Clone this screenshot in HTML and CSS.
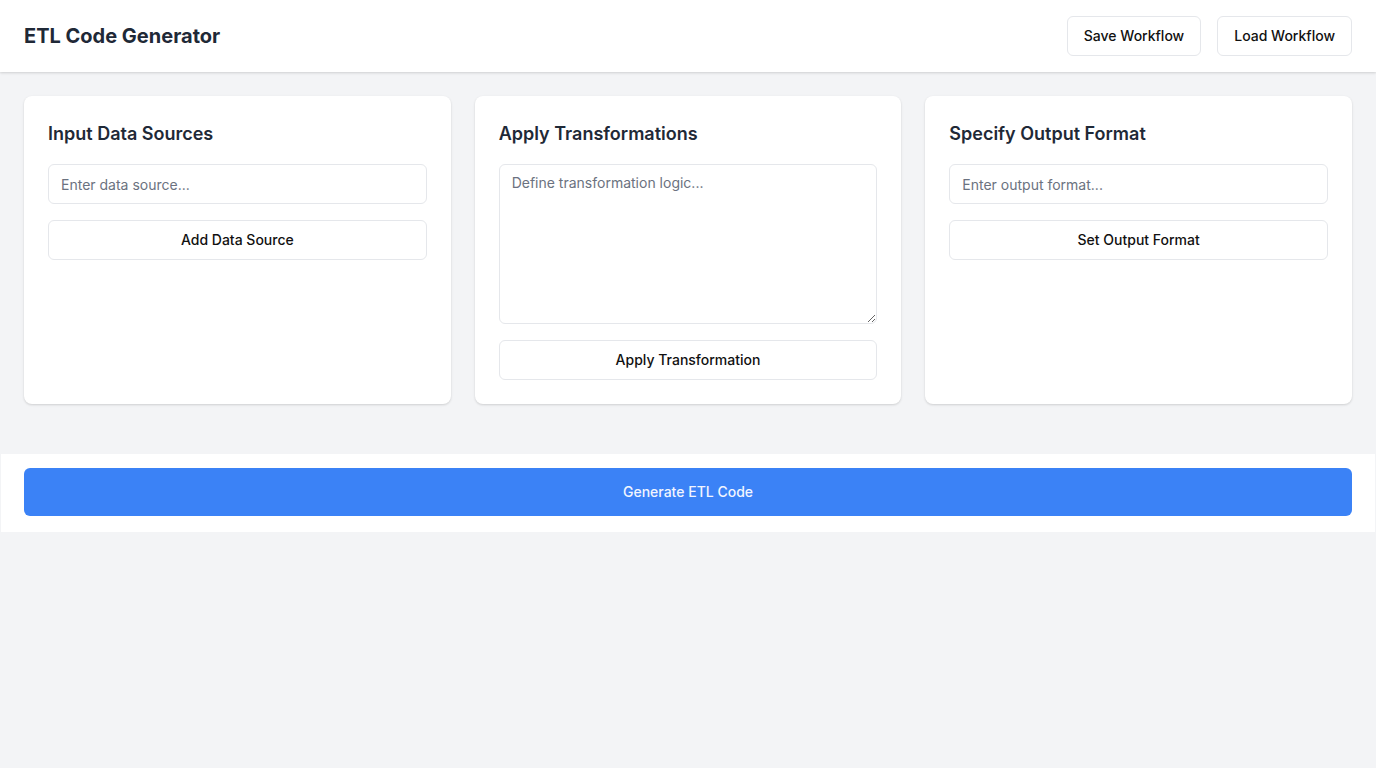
FILE: index.html
```html
<!DOCTYPE html>
<html lang="en">
<head>
<meta charset="utf-8">
<title>ETL Code Generator</title>
<link rel="stylesheet" href="styles.css">
</head>
<body>
<header class="topbar">
  <h1 class="brand">ETL Code Generator</h1>
  <div class="top-actions">
    <button class="btn">Save Workflow</button>
    <button class="btn">Load Workflow</button>
  </div>
</header>
<main class="panels">
  <section class="card">
    <h2 class="card-title">Input Data Sources</h2>
    <input class="field" type="text" placeholder="Enter data source...">
    <button class="btn btn-block">Add Data Source</button>
  </section>
  <section class="card">
    <h2 class="card-title">Apply Transformations</h2>
    <textarea class="field area" placeholder="Define transformation logic..."></textarea>
    <button class="btn btn-block">Apply Transformation</button>
  </section>
  <section class="card">
    <h2 class="card-title">Specify Output Format</h2>
    <input class="field" type="text" placeholder="Enter output format...">
    <button class="btn btn-block">Set Output Format</button>
  </section>
</main>
<footer class="footer">
  <button class="btn-primary">Generate ETL Code</button>
</footer>
</body>
</html>
```
FILE: styles.css
```css
* { box-sizing: border-box; }
html, body { margin: 0; padding: 0; }
body {
  background: #f3f4f6;
  font-family: Inter, "Liberation Sans", sans-serif;
  color: #1f2937;
  min-height: 768px;
}
.topbar {
  height: 72px;
  background: #fff;
  display: flex;
  align-items: center;
  justify-content: space-between;
  padding: 0 24px;
  box-shadow: 0 1px 3px rgba(0,0,0,0.1), 0 1px 2px rgba(0,0,0,0.06);
}
.brand {
  margin: 0;
  font-size: 20px;
  font-weight: 700;
  line-height: 28px;
  color: #1f2937;
}
.top-actions { display: flex; gap: 16px; }
.btn {
  height: 40px;
  padding: 0 16px 2px;
  background: #fff;
  border: 1px solid #e5e7eb;
  border-radius: 6px;
  font-family: inherit;
  font-size: 14px;
  font-weight: 500;
  color: #111;
  cursor: pointer;
}
.btn-block { width: 100%; }
.panels {
  display: grid;
  grid-template-columns: repeat(3, 1fr);
  gap: 24px;
  padding: 24px;
}
.card {
  background: #fff;
  border-radius: 8px;
  padding: 24px;
  box-shadow: 0 1px 3px rgba(0,0,0,0.1), 0 1px 2px rgba(0,0,0,0.06);
  display: flex;
  flex-direction: column;
  gap: 16px;
  min-height: 308px;
}
.card-title {
  margin: 0;
  font-size: 18px;
  font-weight: 600;
  line-height: 28px;
  color: #1f2937;
}
.field {
  height: 40px;
  width: 100%;
  padding: 0 12px;
  border: 1px solid #e5e7eb;
  border-radius: 6px;
  font-family: inherit;
  font-size: 14px;
  color: #111;
  background: #fff;
  outline: none;
}
.field::placeholder { color: #6b7280; }
.area {
  height: 160px;
  padding: 8px 12px;
  line-height: 20px;
  resize: vertical;
}
.footer {
  margin-top: 26px;
  background: #fff;
  padding: 14px 23px 16px;
  border-left: 1px solid #f3f4f6;
  border-right: 1px solid #f3f4f6;
}
.btn-primary {
  display: block;
  width: 100%;
  height: 48px;
  padding: 0 0 2px;
  background: #3b82f6;
  color: #f1f5ff;
  border: none;
  border-radius: 6px;
  font-family: inherit;
  font-size: 14px;
  font-weight: 500;
  cursor: pointer;
}
```
